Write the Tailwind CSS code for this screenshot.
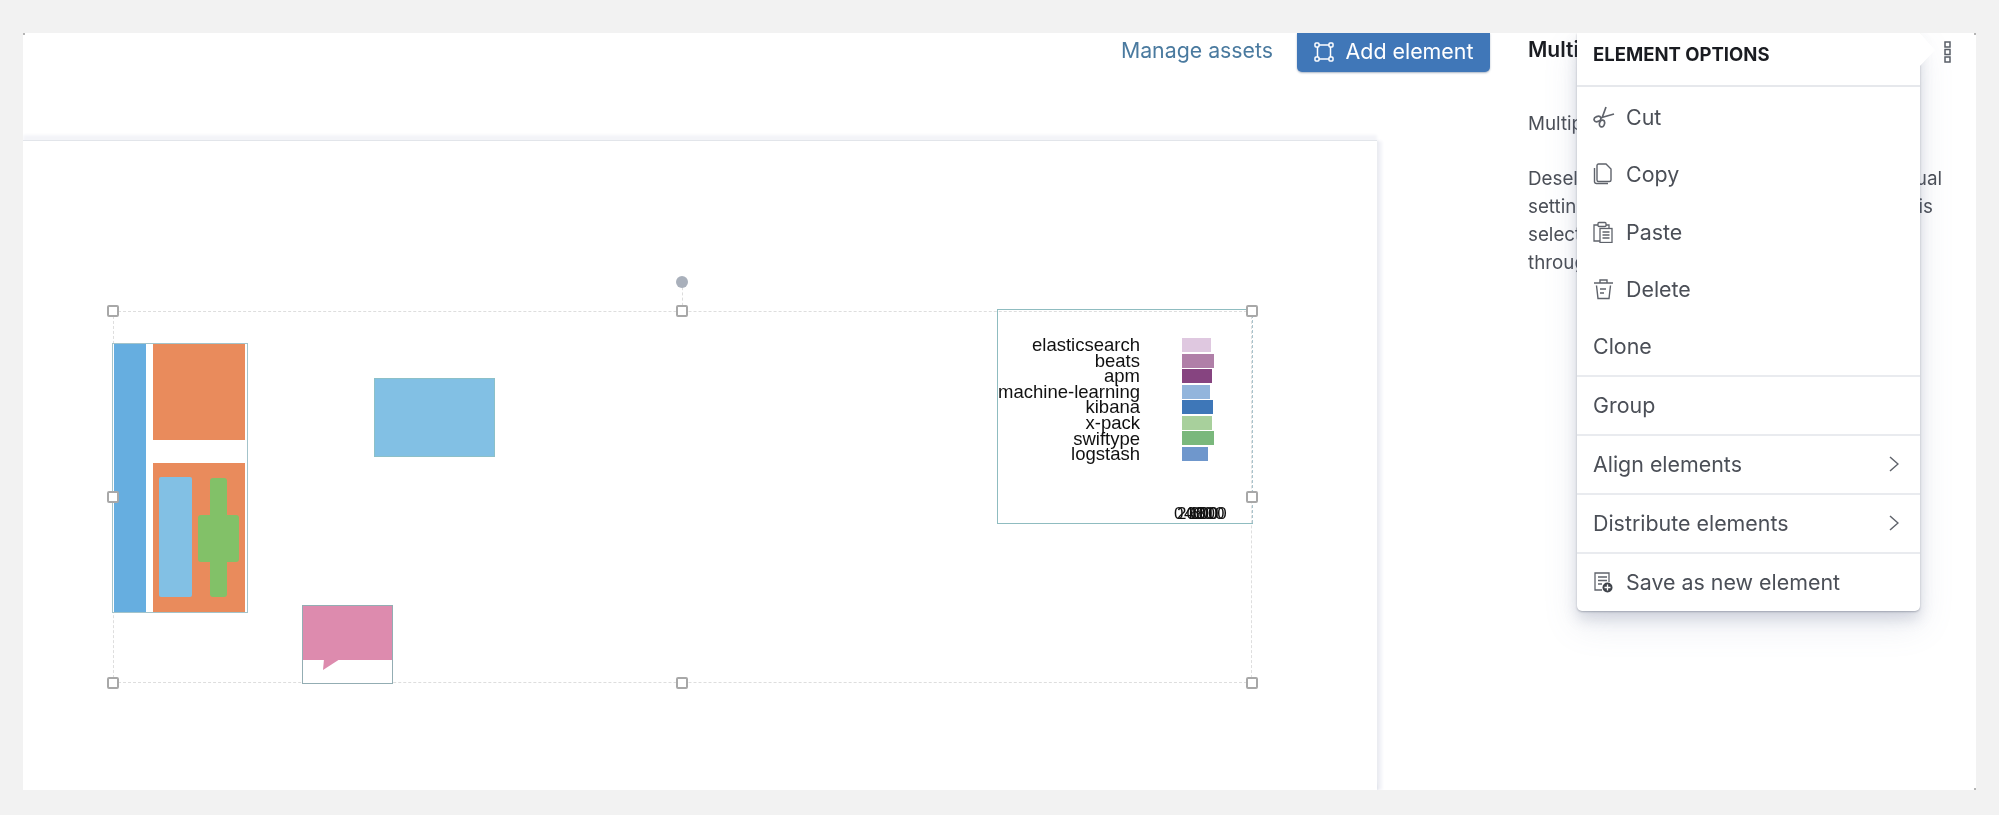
<!DOCTYPE html>
<html lang="en">
<head>
<meta charset="utf-8">
<title>Canvas element options</title>
<script src="https://cdn.jsdelivr.net/npm/@tailwindcss/browser@4"></script>
</head>
<body class="m-0 bg-[#f2f2f2] font-['Inter','Liberation_Sans',sans-serif]">
<div class="h-[815px] w-[1999px] pt-[33px] pb-[25px] pl-[23px] pr-[23px] overflow-hidden">
  <div class="relative flex h-[757px] w-[1953px] bg-white overflow-hidden blur-[0.5px]">
    <!-- corner specks -->
    <div class="absolute left-0 top-0 h-[2px] w-[2px] bg-[#b5b5b5]"></div>
    <div class="absolute right-0 top-0 h-[2px] w-[2px] bg-[#b5b5b5]"></div>
    <div class="absolute bottom-0 right-0 h-[2px] w-[2px] bg-[#b5b5b5]"></div>

    <!-- left: toolbar + workpad -->
    <div class="flex w-[1505px] flex-col">
      <div class="flex h-[102px] shrink-0 items-start justify-end gap-6 pr-[38px]">
        <span class="mt-[3px] text-[21.300px] leading-[28px] text-[#4a7a9f]">Manage assets</span>
        <button class="flex h-[39px] w-[193px] items-center justify-center gap-[12px] rounded-b-[5px] bg-[#4077b8] pb-[2px] text-[21.400px] text-white shadow-[0_1px_2px_rgba(40,70,110,0.4)]">
          <svg class="h-[20px] w-[20px]" viewBox="0 0 20 20" fill="none" stroke="currentColor" stroke-width="1.5"><rect x="1" y="1" width="4" height="4" rx="1"/><rect x="15" y="1" width="4" height="4" rx="1"/><rect x="1" y="15" width="4" height="4" rx="1"/><rect x="15" y="15" width="4" height="4" rx="1"/><path d="M5 3h10M5 17h10M3.500 5v10M16.500 5v10"/></svg>
          <span>Add element</span>
        </button>
      </div>
      <div class="relative h-[655px] w-[1354px] mt-[6px] bg-white shadow-[0_-1px_0_#e2e5ea,0_-6px_3px_#f3f4f8,1px_0_2px_#dfe2ea,5px_0_3px_#f1f2f7]">
        <!-- selection frame -->
        <div class="absolute left-[90px] top-[170px] h-[372px] w-[1139px] border border-dashed border-[#dedede]"></div>
        <div class="absolute left-[659px] top-[141px] h-[29px] border-l border-dashed border-[#dcdcdc]"></div>
        <div class="absolute left-[653px] top-[135px] h-[12px] w-[12px] rounded-full bg-[#a9b0bb]"></div>

        <!-- grouped left shape -->
        <div class="absolute left-[89px] top-[202px] h-[270px] w-[136px] border border-[#a3c3ca] bg-white">
          <div class="absolute left-[1px] top-0 h-full w-[32px] bg-[#66aee0]"></div>
          <div class="absolute left-[40px] top-0 h-[96px] w-[92px] bg-[#e98b5c]"></div>
          <div class="absolute left-[40px] top-[119px] h-[149px] w-[92px] bg-[#e98b5c]">
            <div class="absolute left-[6px] top-[14px] h-[120px] w-[33px] rounded-[2px] bg-[#82c0e4]"></div>
            <div class="absolute left-[57px] top-[15px] h-[119px] w-[17px] rounded-[3px] bg-[#82c168]"></div>
            <div class="absolute left-[45px] top-[52px] h-[47px] w-[41px] rounded-[3px] bg-[#82c168]"></div>
          </div>
        </div>

        <!-- blue rectangle -->
        <div class="absolute left-[351px] top-[237px] h-[79px] w-[121px] border border-[#8cc0c8] bg-[#82c0e4]"></div>

        <!-- speech bubble -->
        <div class="absolute left-[279px] top-[464px] h-[79px] w-[91px] border border-[#93adb3] bg-white">
          <div class="h-[54px] w-full bg-[#dd8bae]"></div>
          <svg class="absolute left-[17px] top-[53px] h-[14px] w-[20px]" viewBox="0 0 20 14"><path d="M4 0h16L3 11z" fill="#dd8bae"/></svg>
        </div>

        <!-- chart -->
        <div class="absolute left-[974px] top-[168px] h-[215px] w-[256px] border-y border-l border-[#8fbcc0] font-['Liberation_Sans',sans-serif]">
          <div class="absolute left-0 top-[27px] flex w-[142px] flex-col items-end text-[18.500px] leading-[15.600px] text-[#111]">
            <span>elasticsearch</span><span>beats</span><span>apm</span><span class="whitespace-nowrap">machine-learning</span><span>kibana</span><span>x-pack</span><span>swiftype</span><span>logstash</span>
          </div>
          <div class="absolute left-[184px] top-[28px] flex w-[40px] flex-col gap-[1.500px]">
            <div class="h-[14px] w-[29px] bg-[#dfc8e0]"></div>
            <div class="h-[14px] w-[32px] bg-[#b07fa8]"></div>
            <div class="h-[14px] w-[30px] bg-[#864480]"></div>
            <div class="h-[14px] w-[28px] bg-[#92b5dc]"></div>
            <div class="h-[14px] w-[31px] bg-[#3e77b8]"></div>
            <div class="h-[14px] w-[30px] bg-[#a8d09c]"></div>
            <div class="h-[14px] w-[32px] bg-[#7ab87c]"></div>
            <div class="h-[14px] w-[26px] bg-[#6f97cc]"></div>
          </div>
          <!-- overlapping axis labels -->
          <span class="absolute left-[176px] top-[194px] text-[17px] leading-[20px] text-[#111]">0</span>
          <span class="absolute left-[179px] top-[194px] text-[17px] leading-[20px] text-[#111]">200</span>
          <span class="absolute left-[186px] top-[194px] text-[17px] leading-[20px] text-[#111]">400</span>
          <span class="absolute left-[192px] top-[194px] text-[17px] leading-[20px] text-[#111]">600</span>
          <span class="absolute left-[198px] top-[194px] text-[17px] leading-[20px] text-[#111]">800</span>
          <span class="absolute left-[191px] top-[194px] text-[17px] leading-[20px] text-[#111]">1000</span>
          <div class="absolute right-0 top-0 h-full border-r border-dashed border-[#a9c3cc]"></div>
        </div>

        <!-- handles -->
        <div class="absolute left-[84px] top-[164px] h-[12px] w-[12px] rounded-[2px] border-2 border-[#a8a8a8] bg-white"></div>
        <div class="absolute left-[653px] top-[164px] h-[12px] w-[12px] rounded-[2px] border-2 border-[#a8a8a8] bg-white"></div>
        <div class="absolute left-[1223px] top-[164px] h-[12px] w-[12px] rounded-[2px] border-2 border-[#a8a8a8] bg-white"></div>
        <div class="absolute left-[84px] top-[350px] h-[12px] w-[12px] rounded-[2px] border-2 border-[#a8a8a8] bg-white"></div>
        <div class="absolute left-[1223px] top-[350px] h-[12px] w-[12px] rounded-[2px] border-2 border-[#a8a8a8] bg-white"></div>
        <div class="absolute left-[84px] top-[536px] h-[12px] w-[12px] rounded-[2px] border-2 border-[#a8a8a8] bg-white"></div>
        <div class="absolute left-[653px] top-[536px] h-[12px] w-[12px] rounded-[2px] border-2 border-[#a8a8a8] bg-white"></div>
        <div class="absolute left-[1223px] top-[536px] h-[12px] w-[12px] rounded-[2px] border-2 border-[#a8a8a8] bg-white"></div>
      </div>
    </div>

    <!-- sidebar -->
    <aside class="w-[448px] pr-[40px] text-[18.800px] leading-[28px] text-[#4b4f57]">
      <h2 class="mt-[3px] text-[21px] font-semibold leading-[28px] text-[#1a1c21]">Multiple elements</h2>
      <p class="mt-[46px]">Multiple elements selected</p>
      <p class="mt-[27px] w-[420px]">Deselect these elements to edit their individual settings, press (G) to group them, or save this selection as a new element to re-use it throughout your workpad.</p>
    </aside>
    <svg class="absolute left-[1918px] top-[8px] h-[22px] w-[14px]" viewBox="0 0 14 22" fill="none" stroke="#5a5f68" stroke-width="1.500"><rect x="4" y="1" width="5" height="5"/><rect x="4" y="8.500" width="5" height="5"/><rect x="4" y="16" width="5" height="5"/></svg>

    <!-- popover menu -->
    <div class="absolute left-[1554px] top-0 w-[343px] rounded-b-[5px] bg-white text-[21.400px] text-[#4b4f57] shadow-[0_1px_2px_rgba(60,70,90,0.35),0_8px_14px_rgba(90,100,130,0.2),0_14px_34px_rgba(120,130,170,0.16)]">
      <svg class="absolute left-[342px] top-0 h-[36px] w-[17px]" viewBox="0 0 17 36"><path d="M0 -1 L16 17 L0 34 Z" fill="#ffffff"/></svg>
      <div class="flex h-[54px] items-start border-b-2 border-[#e6e8ec] px-4 pt-[9px] text-[18.500px] font-bold leading-[24px] text-[#1a1c21]">ELEMENT OPTIONS</div>
      <div class="border-b-2 border-[#e9ebef]">
        <div class="flex h-[57.500px] items-center gap-[13px] px-4 pt-[2px]">
          <svg class="h-[22px] w-[22px] shrink-0 -mr-[2px]" viewBox="0 0 22 22" fill="none" stroke="#5f636b" stroke-width="1.700"><path d="M13 1 9 12M21 8 7 12"/><ellipse cx="4.500" cy="13" rx="3.500" ry="2.500" transform="rotate(-20 4.500 13)"/><ellipse cx="9" cy="17.500" rx="2.500" ry="3.500" transform="rotate(15 9 17.500)"/></svg>
          <span>Cut</span>
        </div>
        <div class="flex h-[57.500px] items-center gap-[13px] px-4 pt-[2px]">
          <svg class="h-[22px] w-[20px] shrink-0" viewBox="0 0 20 22" fill="none" stroke="#5f636b" stroke-width="1.400"><path d="M1.500 5v14a2 2 0 0 0 2 1.500H15"/><path d="M4 2.500a1.500 1.500 0 0 1 1.500-1.500H13l5 5v11a1.500 1.500 0 0 1-1.500 1.500h-11A1.500 1.500 0 0 1 4 17z"/></svg>
          <span>Copy</span>
        </div>
        <div class="flex h-[57.500px] items-center gap-[13px] px-4 pt-[2px]">
          <svg class="h-[22px] w-[20px] shrink-0" viewBox="0 0 20 22" fill="none" stroke="#5f636b" stroke-width="1.300"><path d="M5 4H1v16h6"/><path d="M13 4h3v3"/><rect x="5" y="1.500" width="8" height="4" rx="1"/><rect x="7" y="7.500" width="12" height="14"/><path d="M9.500 11h7M9.500 14h7M9.500 17h7"/></svg>
          <span>Paste</span>
        </div>
        <div class="flex h-[57.500px] items-center gap-[13px] px-4 pt-[2px]">
          <svg class="h-[22px] w-[20px] shrink-0" viewBox="0 0 20 22" fill="none" stroke="#5f636b" stroke-width="1.400"><path d="M1 5h19M7 5V2h7v3"/><path d="M3.500 7.500 5 20.500h11l1.500-13"/><path d="M7 11h6M7 15h4"/></svg>
          <span>Delete</span>
        </div>
        <div class="flex h-[57.500px] items-center px-4"><span>Clone</span></div>
      </div>
      <div class="flex h-[59px] items-center border-b-2 border-[#e9ebef] px-4"><span>Group</span></div>
      <div class="flex h-[59px] items-center justify-between border-b-2 border-[#e9ebef] pl-4 pr-[21px]">
        <span>Align elements</span>
        <svg class="h-[16px] w-[10px]" viewBox="0 0 10 16" fill="none" stroke="#5f636b" stroke-width="1.500"><path d="M1 1l8 7-8 7"/></svg>
      </div>
      <div class="flex h-[59px] items-center justify-between border-b-2 border-[#e9ebef] pl-4 pr-[21px]">
        <span>Distribute elements</span>
        <svg class="h-[16px] w-[10px]" viewBox="0 0 10 16" fill="none" stroke="#5f636b" stroke-width="1.500"><path d="M1 1l8 7-8 7"/></svg>
      </div>
      <div class="flex h-[57px] items-center gap-[13px] px-4">
        <svg class="h-[22px] w-[20px] shrink-0" viewBox="0 0 20 22" fill="none" stroke="#5f636b" stroke-width="1.300"><path d="M9 19H2V2h14v9"/><path d="M5 6h9M5 9.500h9M5 13h4"/><circle cx="14.500" cy="16.500" r="5" fill="#3f434a" stroke="none"/><path d="M14.500 13.500v6M11.500 16.500h6" stroke="#ffffff"/></svg>
        <span>Save as new element</span>
      </div>
    </div>
  </div>
</div>
</body>
</html>
